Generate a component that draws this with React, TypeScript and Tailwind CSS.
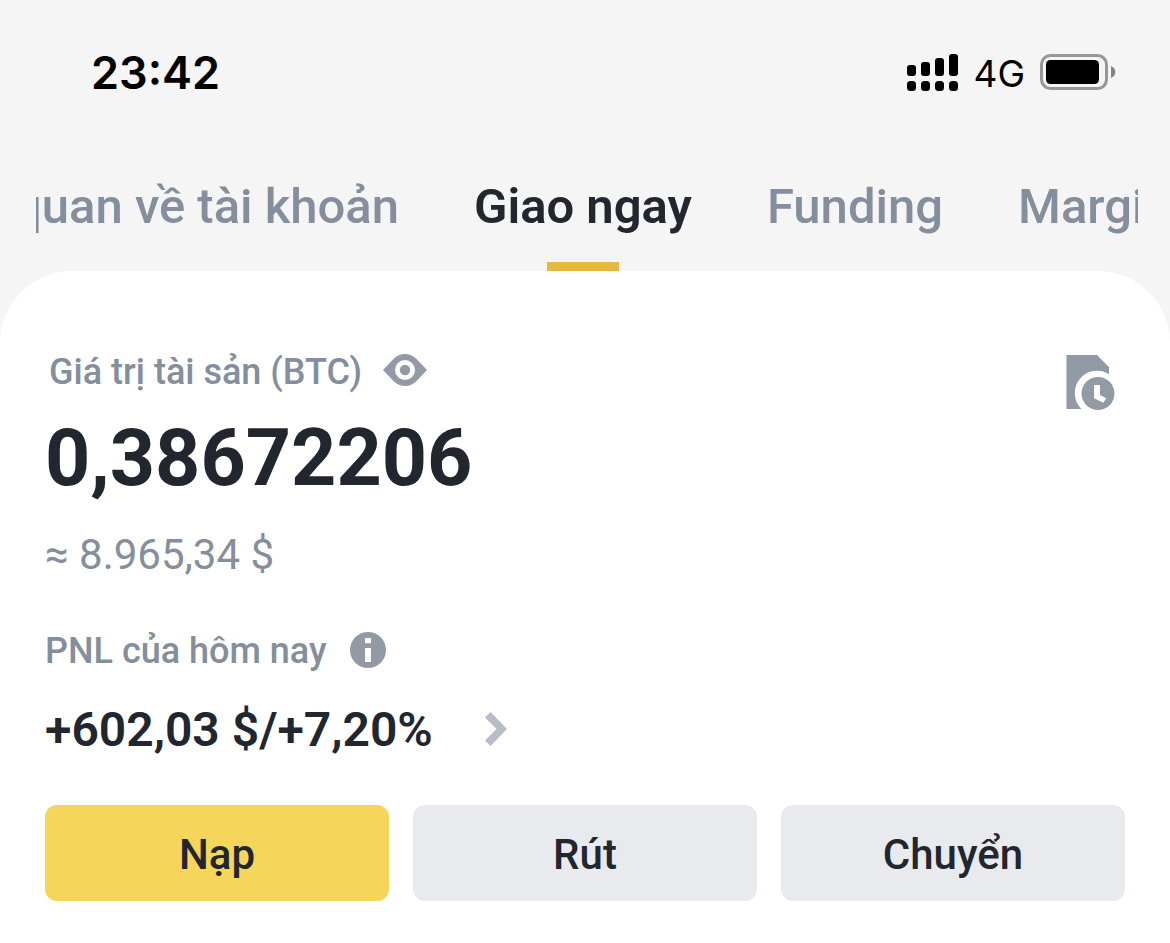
import clsx from 'clsx';

const TABS = [
  { id: 'overview', label: 'Tổng quan về tài khoản' },
  { id: 'spot', label: 'Giao ngay' },
  { id: 'funding', label: 'Funding' },
  { id: 'margin', label: 'Margin' },
];

const ACTIONS = [
  { label: 'Nạp', primary: true },
  { label: 'Rút', primary: false },
  { label: 'Chuyển', primary: false },
];

function SignalIcon() {
  return (
    <svg viewBox="0 0 51 37" className="h-[37px] w-[51px]" aria-hidden="true">
      <rect x="0" y="11" width="9" height="11" rx="3" />
      <rect x="14" y="8" width="9" height="14" rx="3" />
      <rect x="28" y="4" width="9" height="18" rx="3" />
      <rect x="42" y="0" width="9" height="22" rx="3" />
      <rect x="0" y="27" width="9" height="10" rx="3.5" />
      <rect x="14" y="27" width="9" height="10" rx="3.5" />
      <rect x="28" y="27" width="9" height="10" rx="3.5" />
      <rect x="42" y="27" width="9" height="10" rx="3.5" />
    </svg>
  );
}

function BatteryIcon() {
  return (
    <svg viewBox="0 0 76 36" className="h-9 w-[76px]" aria-hidden="true">
      <rect x="1.5" y="1.5" width="65" height="33" rx="9" fill="none" stroke="#979797" strokeWidth="3" />
      <rect x="6" y="6" width="53" height="24" rx="4.5" />
      <path d="M71 12c2.600 1 4.300 3.300 4.300 6s-1.700 5-4.300 6z" fill="#858585" />
    </svg>
  );
}

function EyeIcon() {
  return (
    <svg viewBox="0 0 44 32" className="h-8 w-11" fill="#929aa5" aria-hidden="true">
      <path
        fillRule="evenodd"
        d="M0 16 10.500 5C14 1.500 17.500 0 22 0s8 1.500 11.500 5L44 16 33.500 27C30 30.500 26.500 32 22 32s-8-1.500-11.500-5zM22 6a10 10 0 1 0 0 20 10 10 0 0 0 0-20z"
      />
      <circle cx="22" cy="16" r="5.200" />
    </svg>
  );
}

function HistoryIcon() {
  return (
    <svg viewBox="0 0 50 56" className="h-14 w-[50px]" fill="#929aa5" aria-hidden="true">
      <path d="M.5 0H31L43 12v7.200A22.300 22.300 0 0 0 15.500 54H.5z" />
      <path
        fillRule="evenodd"
        d="M32 22a16.500 16.500 0 1 0 0 33 16.500 16.500 0 0 0 0-33zM28 30h6v10l6.300 3.300-3 4.400-9.300-4.400z"
      />
    </svg>
  );
}

function InfoIcon() {
  return (
    <svg viewBox="0 0 36 36" className="size-9" aria-hidden="true">
      <circle cx="18" cy="18" r="18" fill="#929aa5" />
      <path d="M15 6h6v5.200h-6zM15 16h6v14h-6z" fill="#fff" />
    </svg>
  );
}

function ChevronIcon() {
  return (
    <svg viewBox="0 0 22 34" className="h-[34px] w-[22px]" aria-hidden="true">
      <path d="M5.500 0 22 17 5.500 34 0 28.600 11.500 17 0 5.400z" fill="#b7bdc6" />
    </svg>
  );
}

function StatusBar() {
  return (
    <header className="flex h-[144px] items-center justify-between pr-[54px] pl-[91px] font-[Inter,sans-serif] text-black">
      <span className="pt-px text-[45px] font-semibold">23:42</span>
      <div className="flex items-center gap-[15px]">
        <SignalIcon />
        <span className="pt-1 text-[37px]">4G</span>
        <BatteryIcon />
      </div>
    </header>
  );
}

function AccountTabs() {
  return (
    <nav className="mr-8 ml-9 flex h-[127px] gap-[75px] overflow-hidden" role="tablist">
      {TABS.map((tab) => {
        const active = tab.id === 'spot';
        return (
          <button
            key={tab.id}
            type="button"
            role="tab"
            aria-selected={active}
            className={clsx(
              'relative flex shrink-0 justify-center pt-8 text-[49px] leading-[62px] whitespace-nowrap',
              active ? 'font-semibold text-[#21262f]' : 'font-medium text-[#848e9c]',
              tab.id === 'overview' && 'w-[363px] justify-end overflow-hidden',
            )}
          >
            {tab.label}
            {active && <span className="absolute bottom-0 left-1/2 h-[9px] w-[72px] -translate-x-1/2 bg-[#e6b940]" />}
          </button>
        );
      })}
    </nav>
  );
}

export default function App() {
  return (
    <div className="min-h-screen bg-[#f5f5f5] font-[Roboto,'Noto_Sans',sans-serif]">
      <StatusBar />
      <AccountTabs />

      <main className="min-h-[672px] rounded-t-[72px] bg-white px-[45px] pt-[75px] text-[#21262f]">
        <div className="flex items-start justify-between">
          <div className="flex h-12 items-center gap-[21px] pl-1 text-[36px] font-medium text-[#848e9c]">
            <h1 className="pt-1">Giá trị tài sản (BTC)</h1>
            <button type="button" aria-label="Ẩn số dư">
              <EyeIcon />
            </button>
          </div>
          <button type="button" aria-label="Lịch sử" className="mt-[9px] mr-[9px]">
            <HistoryIcon />
          </button>
        </div>

        <p className="text-[79px] leading-[94px] font-bold">0,38672206</p>
        <p className="mt-[21px] text-[42px] leading-[58px] text-[#848e9c]">≈ 8.965,34 $</p>

        <div className="mt-[42px] flex h-12 items-center gap-[23px] text-[36px] font-medium text-[#848e9c]">
          <h2 className="pt-0.5">PNL của hôm nay</h2>
          <button type="button" aria-label="Thông tin PNL">
            <InfoIcon />
          </button>
        </div>
        <button type="button" className="mt-[23px] flex h-16 items-center gap-[52px] text-[48px] font-semibold">
          <span className="pt-0.5">+602,03 $/+7,20%</span>
          <ChevronIcon />
        </button>

        <div className="mt-11 grid grid-cols-3 gap-6">
          {ACTIONS.map((action) => (
            <button
              key={action.label}
              type="button"
              className={clsx(
                'h-24 rounded-xl pt-0.5 text-[42px] font-medium',
                action.primary ? 'bg-[#f5d55a]' : 'bg-[#e9eaed]',
              )}
            >
              {action.label}
            </button>
          ))}
        </div>
      </main>
    </div>
  );
}
